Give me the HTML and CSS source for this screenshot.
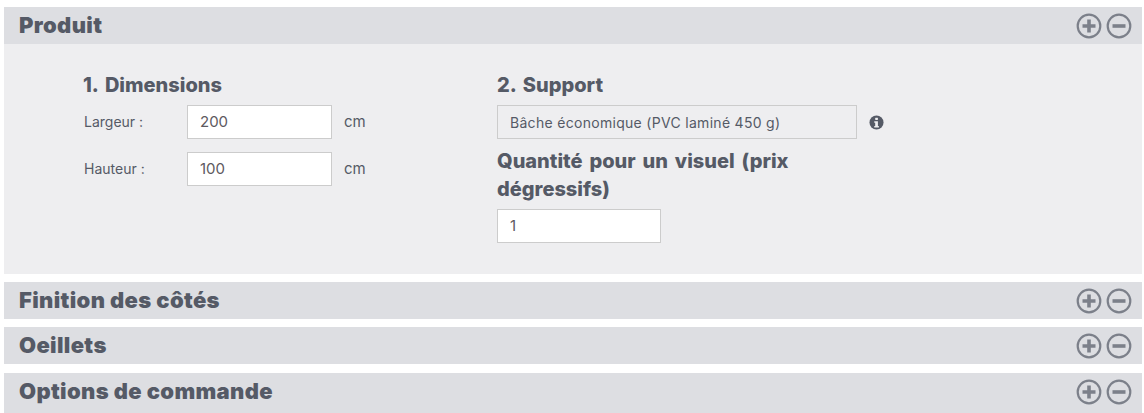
FILE: index.html
```html
<!DOCTYPE html>
<html lang="fr">
<head>
    <meta charset="UTF-8">
    <meta name="viewport" content="width=device-width, initial-scale=1.0">
    <title>Produit</title>
    <link rel="stylesheet" href="styles.css">
</head>
<body>

<svg class="icon-defs" width="0" height="0">
    <symbol id="icon-plus" viewBox="0 0 26 26">
        <circle cx="13" cy="13" r="11.3" fill="none" stroke="currentColor" stroke-width="2.2"/>
        <path d="M13 6.5v13M6.5 13h13" fill="none" stroke="currentColor" stroke-width="3.6"/>
    </symbol>
    <symbol id="icon-minus" viewBox="0 0 26 26">
        <circle cx="13" cy="13" r="11.3" fill="none" stroke="currentColor" stroke-width="2.2"/>
        <path d="M6.5 13h13" fill="none" stroke="currentColor" stroke-width="3.6"/>
    </symbol>
</svg>

<section class="panel">
    <div class="panel-head">
        <h2>Produit</h2>
        <div class="toggles">
            <svg><use href="#icon-plus"/></svg>
            <svg><use href="#icon-minus"/></svg>
        </div>
    </div>
    <div class="panel-body">
        <div class="col-dimensions">
            <h3>1. Dimensions</h3>
            <div class="field">
                <label for="largeur">Largeur :</label>
                <input id="largeur" type="text" value="200">
                <span class="unit">cm</span>
            </div>
            <div class="field">
                <label for="hauteur">Hauteur :</label>
                <input id="hauteur" type="text" value="100">
                <span class="unit">cm</span>
            </div>
        </div>
        <div class="col-support">
            <h3>2. Support</h3>
            <div class="support-row">
                <select class="support-select">
                    <option>Bâche économique (PVC laminé 450 g)</option>
                </select>
                <svg class="info" viewBox="0 0 16 16">
                    <circle cx="8" cy="8" r="7.5" fill="currentColor"/>
                    <rect x="6.6" y="2.8" width="2.9" height="2.6" rx="0.5" fill="#eeeef0"/>
                    <path d="M5.6 6.6h3.9v5.2h1v1.6H5.6v-1.6h1V8.2h-1z" fill="#eeeef0"/>
                </svg>
            </div>
            <h3 class="qty-title">Quantité pour un visuel (prix dégressifs)</h3>
            <input class="qty" type="text" value="1">
        </div>
    </div>
</section>

<section class="panel">
    <div class="panel-head">
        <h2>Finition des côtés</h2>
        <div class="toggles">
            <svg><use href="#icon-plus"/></svg>
            <svg><use href="#icon-minus"/></svg>
        </div>
    </div>
</section>

<section class="panel">
    <div class="panel-head">
        <h2>Oeillets</h2>
        <div class="toggles">
            <svg><use href="#icon-plus"/></svg>
            <svg><use href="#icon-minus"/></svg>
        </div>
    </div>
</section>

<section class="panel panel-last">
    <div class="panel-head">
        <h2>Options de commande</h2>
        <div class="toggles">
            <svg><use href="#icon-plus"/></svg>
            <svg><use href="#icon-minus"/></svg>
        </div>
    </div>
</section>

</body>
</html>
```

FILE: styles.css
```css
html, body {
    height: 413px;
    overflow: hidden;
}
body {
    margin: 0;
    padding: 7px 2px 0 4px;
    background-color: #fff;
    color: #555a66;
    font-family: Inter, "Liberation Sans", sans-serif;
}
.icon-defs {
    position: absolute;
}
.panel {
    margin-bottom: 8px;
}
.panel-last {
    margin-top: 9px;
}
.panel-head {
    display: flex;
    align-items: center;
    justify-content: space-between;
    height: 37px;
    padding: 0 10px 0 15px;
    background-color: #dddee2;
}
.panel-last .panel-head {
    height: 40px;
    padding-bottom: 3px;
    box-sizing: border-box;
}
.panel-head h2 {
    margin: 0 0 1px;
    font-size: 22px;
    font-weight: 900;
    letter-spacing: 0.35px;
}
.toggles {
    display: flex;
    gap: 4px;
    color: #7c808a;
}
.toggles svg {
    width: 26px;
    height: 26px;
}
.panel-body {
    display: flex;
    height: 230px;
    box-sizing: border-box;
    padding: 29px 0 0 79px;
    background-color: #eeeef0;
}
.col-dimensions {
    width: 414px;
}
.col-support {
    width: 390px;
}
h3 {
    margin: 0;
    font-size: 20px;
    line-height: 24px;
    font-weight: 800;
    word-spacing: 2.5px;
}
.field {
    display: flex;
    align-items: center;
    margin-top: 8px;
    margin-bottom: 13px;
    font-size: 14px;
}
.field + .field {
    margin-top: 0;
}
.field label {
    width: 103px;
    padding-left: 1px;
    padding-bottom: 1px;
    font-size: 14px;
    font-weight: 400;
}
.field input, .qty {
    box-sizing: border-box;
    height: 34px;
    padding: 0 12px 2px;
    border: 1px solid #ccc;
    background-color: #fff;
    color: #5e5a60;
    font-family: inherit;
    font-size: 15px;
}
.field input {
    width: 145px;
}
.unit {
    margin-left: 12px;
    padding-bottom: 2px;
    font-size: 15px;
}
.support-row {
    display: flex;
    align-items: center;
    margin-top: 8px;
}
.support-select {
    appearance: none;
    box-sizing: border-box;
    width: 360px;
    height: 34px;
    padding: 0 12px;
    border: 1px solid #ccc;
    border-radius: 0;
    background-color: #eeeef0;
    color: #555a66;
    font-family: inherit;
    font-size: 14px;
    letter-spacing: 0.3px;
}
.info {
    width: 15px;
    height: 15px;
    margin-left: 12px;
    color: #555a66;
}
.qty-title {
    margin-top: 8px;
    line-height: 28px;
    width: 320px;
}
.qty {
    display: block;
    width: 164px;
    margin-top: 6px;
}
```
